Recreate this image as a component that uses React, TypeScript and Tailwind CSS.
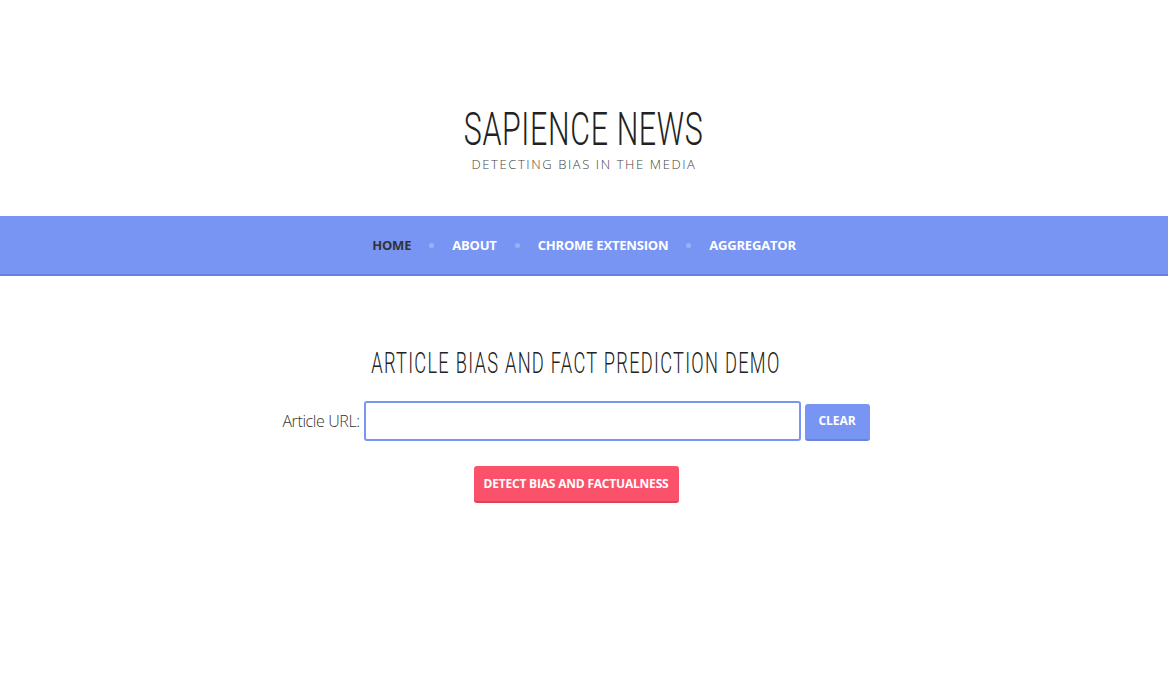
import React, { useState } from "react";

const navItems = ["HOME", "ABOUT", "CHROME EXTENSION", "AGGREGATOR"];

const App = () => {
  const [url, setUrl] = useState("");

  return (
    <div className="min-h-screen bg-white" style={{ fontFamily: "'Open Sans', sans-serif" }}>
      {/* Site header */}
      <header className="flex flex-col items-center pt-[103px] pb-[44px]">
        <h1 className="font-['Roboto',sans-serif] font-light text-[#222] text-[46px] leading-[52px] tracking-[1px] scale-x-[0.66] whitespace-nowrap">
          SAPIENCE NEWS
        </h1>
        <p className="mt-[1px] font-light text-[13px] leading-[16px] tracking-[1.6px] text-[#444]">
          DETECTING BIAS IN THE MEDIA
        </p>
      </header>

      {/* Navigation */}
      <nav className="h-[60px] bg-[#7895f4] border-b-2 border-[#6880dc] flex items-center justify-center">
        <ul className="flex items-center pt-[1px]">
          {navItems.map((item, i) => (
            <li key={item} className="flex items-center">
              {i > 0 && <span className="mx-[18px] w-[5px] h-[5px] rounded-full bg-[#9cb0f5]" />}
              <a
                href="#"
                className={`text-[13px] font-bold tracking-[-0.2px] ${
                  i === 0 ? "text-[#333]" : "text-white"
                }`}
              >
                {item}
              </a>
            </li>
          ))}
        </ul>
      </nav>

      {/* Demo */}
      <main className="flex flex-col items-center pt-[70px] pr-[16px]">
        <h2 className="font-['Roboto',sans-serif] font-light text-[#222] text-[29px] leading-[34px] tracking-[2px] scale-x-[0.63] whitespace-nowrap">
          ARTICLE BIAS AND FACT PREDICTION DEMO
        </h2>
        <div className="mt-[21px] flex items-center">
          <label className="mr-[4px] text-[16px] font-light text-[#333] tracking-[-0.4px]">Article URL:</label>
          <input
            value={url}
            onChange={(e) => setUrl(e.target.value)}
            className="w-[437px] h-[40px] border-2 border-[#7895f4] rounded-[3px] px-2 outline-none"
          />
          <button
            onClick={() => setUrl("")}
            className="ml-[4px] mt-[2px] w-[65px] h-[37px] bg-[#7895f4] border-b-2 border-[#6a84e0] rounded-[3px] text-white text-[12px] font-bold"
          >
            CLEAR
          </button>
        </div>
        <button className="mt-[25px] w-[205px] h-[37px] bg-[#f9526a] border-b-2 border-[#dc4459] rounded-[3px] text-white text-[12px] font-bold tracking-[-0.2px]">
          DETECT BIAS AND FACTUALNESS
        </button>
      </main>
    </div>
  );
};

export default App;
